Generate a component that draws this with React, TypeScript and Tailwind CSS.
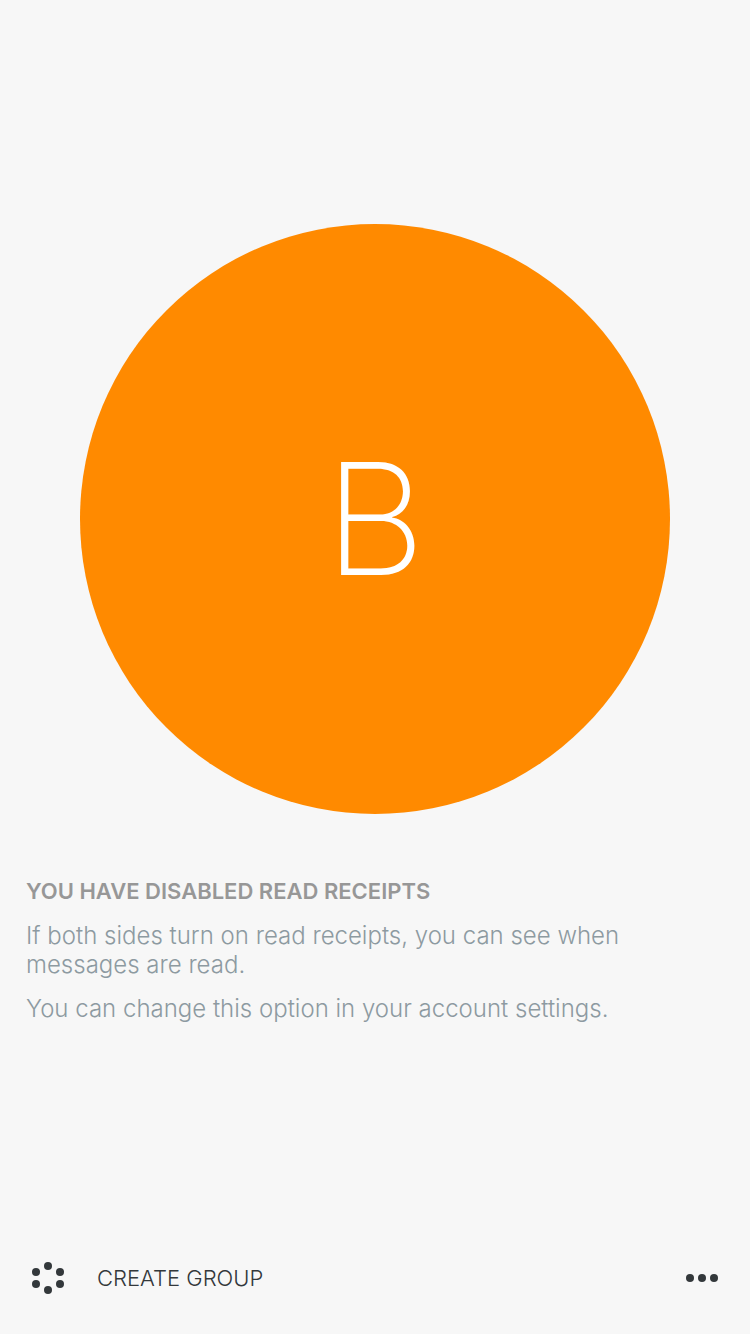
export default function App() {
  return (
    <div className="flex min-h-screen flex-col bg-[#f7f7f7] font-['Inter',sans-serif]">
      <main className="flex flex-1 flex-col">
        <div className="flex justify-center px-20 pt-56">
          <div className="flex aspect-square w-full max-w-[590px] items-center justify-center rounded-full bg-[#ff8a00]">
            <span className="text-[156px] leading-none font-extralight text-white">B</span>
          </div>
        </div>
        <section className="flex flex-col gap-[15px] px-[26px] pt-[63px]">
          <h1 className="text-[22px] leading-[29px] font-semibold text-[#979797]">
            YOU HAVE DISABLED READ RECEIPTS
          </h1>
          <p className="text-[24px] leading-[29px] font-light text-[#8d9aa1]">
            If both sides turn on read receipts, you can see when messages are read.
          </p>
          <p className="text-[24px] leading-[29px] font-light text-[#8d9aa1]">
            You can change this option in your account settings.
          </p>
        </section>
      </main>
      <footer className="flex h-28 items-center justify-between px-8 text-[#33383b]">
        <button type="button" className="flex items-center gap-[33px] text-[22px] font-light">
          <svg width="32" height="32" viewBox="0 0 32 32" fill="currentColor" aria-hidden="true">
            <circle cx="16" cy="4" r="4" />
            <circle cx="28" cy="10" r="4" />
            <circle cx="28" cy="22" r="4" />
            <circle cx="16" cy="28" r="4" />
            <circle cx="4" cy="22" r="4" />
            <circle cx="4" cy="10" r="4" />
          </svg>
          CREATE GROUP
        </button>
        <button type="button" aria-label="More options">
          <svg width="32" height="32" viewBox="0 0 32 32" fill="currentColor" aria-hidden="true">
            <circle cx="4" cy="16" r="4" />
            <circle cx="16" cy="16" r="4" />
            <circle cx="28" cy="16" r="4" />
          </svg>
        </button>
      </footer>
    </div>
  );
}
